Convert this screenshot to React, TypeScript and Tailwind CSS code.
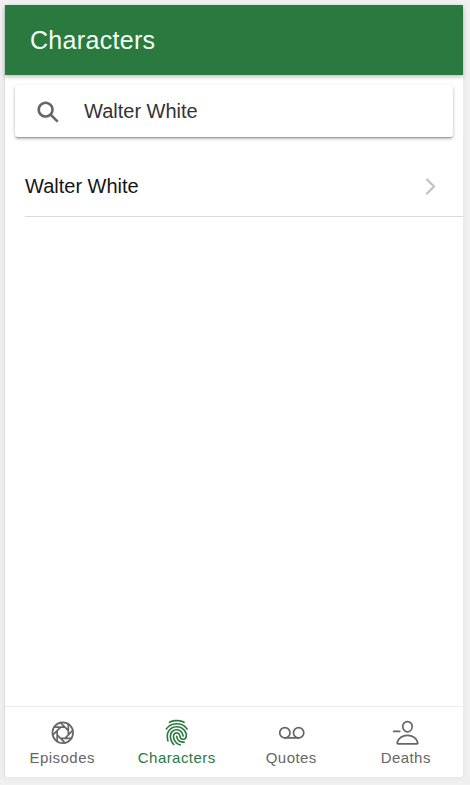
import React from "react";
import {
  IoApertureOutline,
  IoChevronForward,
  IoFingerPrint,
  IoPersonRemoveOutline,
  IoRecordingOutline,
  IoSearchSharp,
} from "react-icons/io5";

const tabs = [
  { label: "Episodes", Icon: IoApertureOutline },
  { label: "Characters", Icon: IoFingerPrint, active: true },
  { label: "Quotes", Icon: IoRecordingOutline },
  { label: "Deaths", Icon: IoPersonRemoveOutline },
];

export default function App() {
  return (
    <div className="h-[785px] w-[470px] overflow-hidden bg-[#f0f0f0] pt-[5px] pl-[4px] font-['Liberation_Sans',Arial,sans-serif]">
      <div className="flex h-[772px] w-[459px] flex-col rounded-b-[3px] border-l border-[#dddddd] bg-white shadow-[0_1px_6px_rgba(0,0,0,0.05)]">
        <header className="flex h-[70px] shrink-0 items-center bg-[#2a793f] pl-[25px] shadow-[0_2px_4px_rgba(0,0,0,0.25)]">
          <h1 className="text-[25px] leading-[30px] tracking-[0.0125em] text-[#f4fff5]">Characters</h1>
        </header>
        <main className="flex-1">
          <div className="mx-[10px] mt-[10px] flex h-[52px] items-center rounded-[3px] bg-white pl-[20px] shadow-[0_2px_3px_rgba(0,0,0,0.2),0_2px_1px_-1px_rgba(0,0,0,0.2),0_1px_4px_rgba(0,0,0,0.12)]">
            <IoSearchSharp className="mt-[2px] size-[26px] text-[#666666]" />
            <input
              aria-label="Search characters"
              defaultValue="Walter White"
              className="ml-[23px] w-[300px] bg-transparent text-[20px] leading-[30px] text-[#333333] outline-none"
            />
          </div>
          <ul className="mt-[19px] pl-[20px]">
            <li className="flex h-[61px] items-center justify-between border-b border-[#dadada] pr-[20px]">
              <span className="text-[20px] leading-[30px] text-[#151515]">Walter White</span>
              <IoChevronForward className="size-[25px] text-[#c2c2c2]" />
            </li>
          </ul>
        </main>
        <nav className="grid h-[71px] shrink-0 grid-cols-4 border-t border-[#ececec]">
          {tabs.map(({ label, Icon, active }) => (
            <a
              key={label}
              className={
                active
                  ? "flex flex-col items-center pt-[12px] text-[#2a793f]"
                  : "flex flex-col items-center pt-[12px] text-[#666666]"
              }
            >
              <Icon className="size-[27.5px]" />
              <span className="mt-[2.5px] text-[15px] leading-[18px] tracking-[0.03em]">{label}</span>
            </a>
          ))}
        </nav>
      </div>
    </div>
  );
}
